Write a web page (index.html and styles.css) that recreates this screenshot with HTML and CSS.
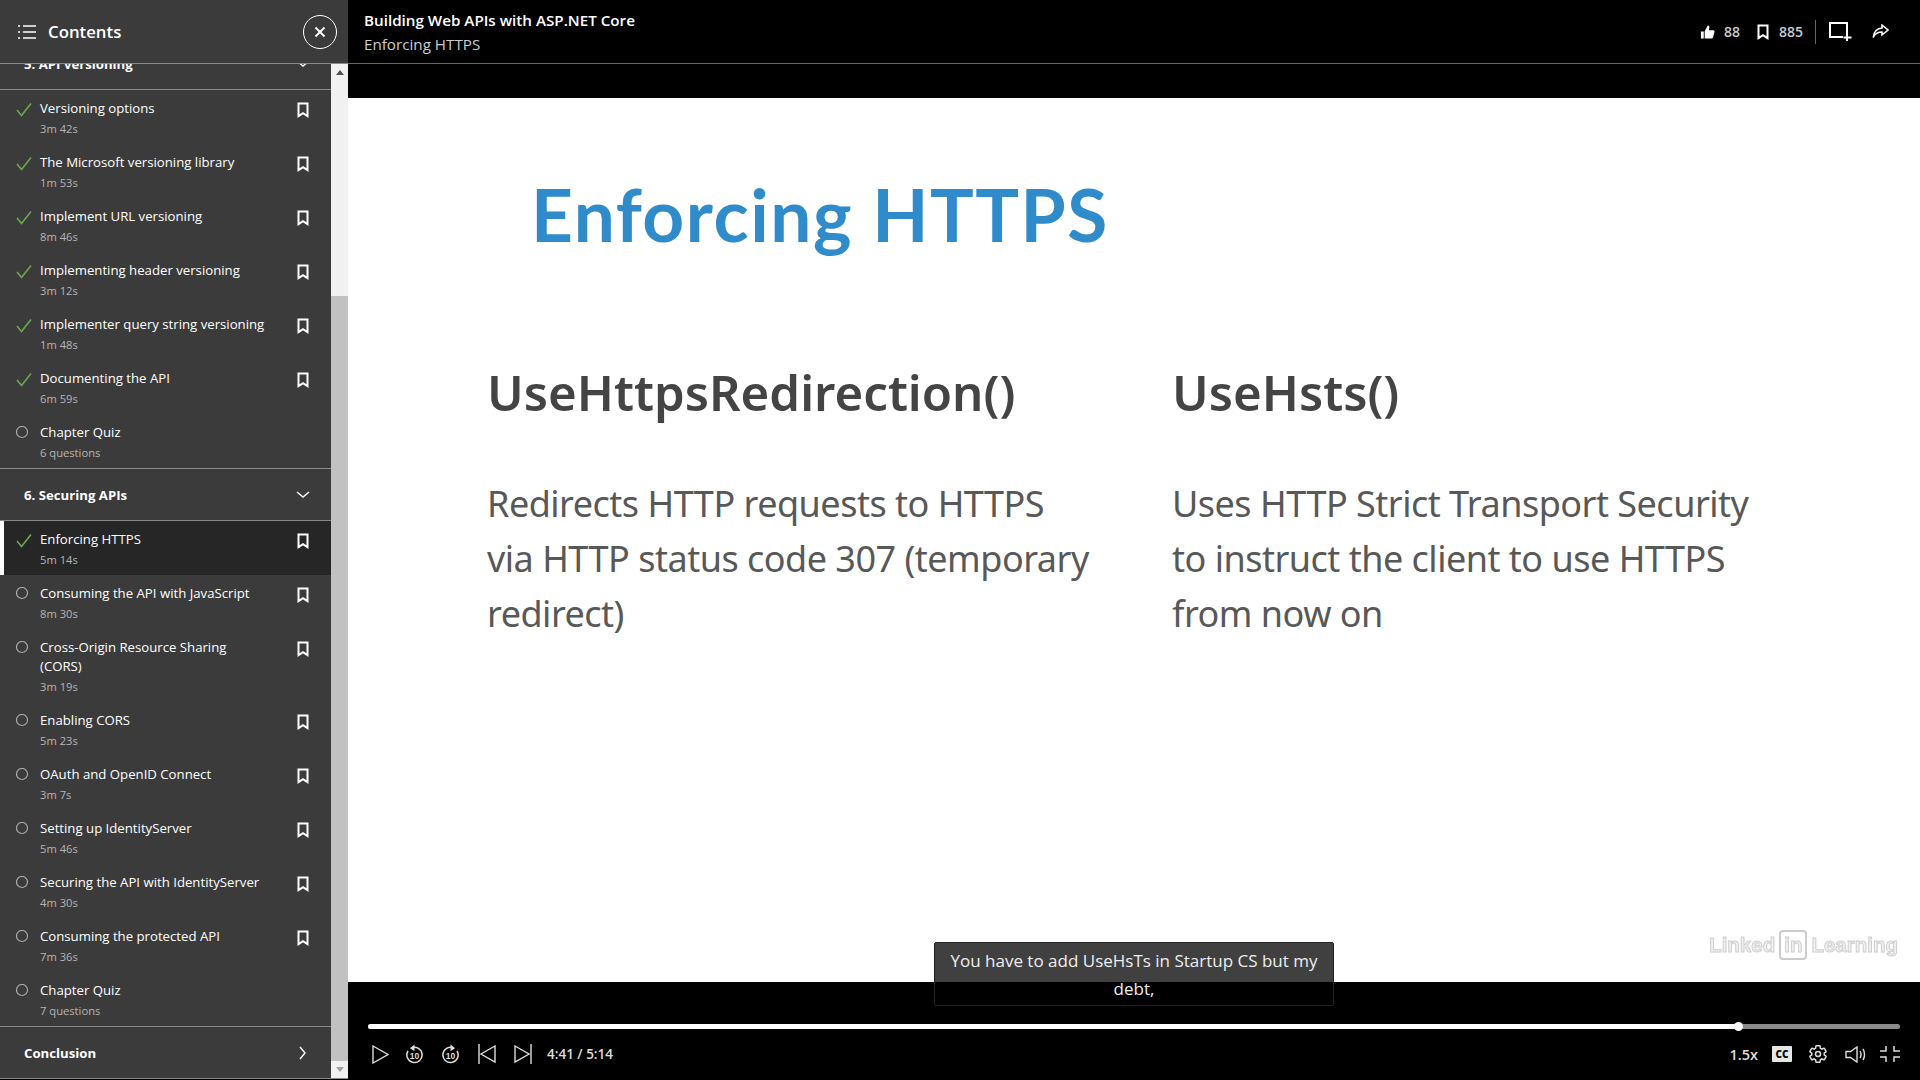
FILE: index.html
```html
<!DOCTYPE html>
<html lang="en">
<head>
    <meta charset="UTF-8">
    <meta name="viewport" content="width=device-width, initial-scale=1.0">
    <title>Enforcing HTTPS - Building Web APIs with ASP.NET Core</title>
    <link rel="stylesheet" href="styles.css">
</head>
<body>
    <svg class="icon-defs" width="0" height="0">
        <symbol id="i-check" viewBox="0 0 16 14"><path d="M1 7.5 L5.5 13 L15 1" fill="none" stroke="#6aa84f" stroke-width="1.6"/></symbol>
        <symbol id="i-circle" viewBox="0 0 16 15"><circle cx="6" cy="6" r="5.5" fill="none" stroke="#aaa" stroke-width="1.2"/></symbol>
        <symbol id="i-bookmark" viewBox="0 0 12 16"><path d="M1.5 1.5h9v12.6L6 11.2 1.5 14.1z" fill="none" stroke="#fff" stroke-width="2"/></symbol>
    </svg>

    <aside class="sidebar">
        <header class="sidebar-head">
            <svg class="list-icon" width="18" height="14" viewBox="0 0 18 14"><path d="M0 1h2M5 1h13M0 7h2M5 7h13M0 13h2M5 13h13" stroke="#fff" stroke-width="1.6" fill="none"/></svg>
            <span class="sidebar-title">Contents</span>
            <button class="close-btn">
                <svg width="12" height="12" viewBox="0 0 12 12"><path d="M1.5 1.5l9 9M10.5 1.5l-9 9" stroke="#fff" stroke-width="1.8"/></svg>
            </button>
        </header>
        <div class="sidebar-body">
            <div class="toc">
                <div class="section section-clipped">
                    <span>5. API versioning</span>
                    <svg class="chev" width="14" height="8" viewBox="0 0 14 8"><path d="M1 1l6 5 6-5" fill="none" stroke="#fff" stroke-width="1.4"/></svg>
                </div>
                <ul class="items">
                    <li class="item"><svg class="state"><use href="#i-check"/></svg><div class="item-text"><div class="item-title">Versioning options</div><div class="item-meta">3m 42s</div></div><svg class="mark"><use href="#i-bookmark"/></svg></li>
                    <li class="item"><svg class="state"><use href="#i-check"/></svg><div class="item-text"><div class="item-title">The Microsoft versioning library</div><div class="item-meta">1m 53s</div></div><svg class="mark"><use href="#i-bookmark"/></svg></li>
                    <li class="item"><svg class="state"><use href="#i-check"/></svg><div class="item-text"><div class="item-title">Implement URL versioning</div><div class="item-meta">8m 46s</div></div><svg class="mark"><use href="#i-bookmark"/></svg></li>
                    <li class="item"><svg class="state"><use href="#i-check"/></svg><div class="item-text"><div class="item-title">Implementing header versioning</div><div class="item-meta">3m 12s</div></div><svg class="mark"><use href="#i-bookmark"/></svg></li>
                    <li class="item"><svg class="state"><use href="#i-check"/></svg><div class="item-text"><div class="item-title">Implementer query string versioning</div><div class="item-meta">1m 48s</div></div><svg class="mark"><use href="#i-bookmark"/></svg></li>
                    <li class="item"><svg class="state"><use href="#i-check"/></svg><div class="item-text"><div class="item-title">Documenting the API</div><div class="item-meta">6m 59s</div></div><svg class="mark"><use href="#i-bookmark"/></svg></li>
                    <li class="item"><svg class="state"><use href="#i-circle"/></svg><div class="item-text"><div class="item-title">Chapter Quiz</div><div class="item-meta">6 questions</div></div></li>
                </ul>
                <div class="section">
                    <span>6. Securing APIs</span>
                    <svg class="chev" width="14" height="8" viewBox="0 0 14 8"><path d="M1 1l6 5 6-5" fill="none" stroke="#fff" stroke-width="1.4"/></svg>
                </div>
                <ul class="items">
                    <li class="item active"><svg class="state"><use href="#i-check"/></svg><div class="item-text"><div class="item-title">Enforcing HTTPS</div><div class="item-meta">5m 14s</div></div><svg class="mark"><use href="#i-bookmark"/></svg></li>
                    <li class="item"><svg class="state"><use href="#i-circle"/></svg><div class="item-text"><div class="item-title">Consuming the API with JavaScript</div><div class="item-meta">8m 30s</div></div><svg class="mark"><use href="#i-bookmark"/></svg></li>
                    <li class="item"><svg class="state"><use href="#i-circle"/></svg><div class="item-text"><div class="item-title">Cross-Origin Resource Sharing<br>(CORS)</div><div class="item-meta">3m 19s</div></div><svg class="mark"><use href="#i-bookmark"/></svg></li>
                    <li class="item"><svg class="state"><use href="#i-circle"/></svg><div class="item-text"><div class="item-title">Enabling CORS</div><div class="item-meta">5m 23s</div></div><svg class="mark"><use href="#i-bookmark"/></svg></li>
                    <li class="item"><svg class="state"><use href="#i-circle"/></svg><div class="item-text"><div class="item-title">OAuth and OpenID Connect</div><div class="item-meta">3m 7s</div></div><svg class="mark"><use href="#i-bookmark"/></svg></li>
                    <li class="item"><svg class="state"><use href="#i-circle"/></svg><div class="item-text"><div class="item-title">Setting up IdentityServer</div><div class="item-meta">5m 46s</div></div><svg class="mark"><use href="#i-bookmark"/></svg></li>
                    <li class="item"><svg class="state"><use href="#i-circle"/></svg><div class="item-text"><div class="item-title">Securing the API with IdentityServer</div><div class="item-meta">4m 30s</div></div><svg class="mark"><use href="#i-bookmark"/></svg></li>
                    <li class="item"><svg class="state"><use href="#i-circle"/></svg><div class="item-text"><div class="item-title">Consuming the protected API</div><div class="item-meta">7m 36s</div></div><svg class="mark"><use href="#i-bookmark"/></svg></li>
                    <li class="item"><svg class="state"><use href="#i-circle"/></svg><div class="item-text"><div class="item-title">Chapter Quiz</div><div class="item-meta">7 questions</div></div></li>
                </ul>
                <div class="section section-last">
                    <span>Conclusion</span>
                    <svg class="chev-right" width="8" height="14" viewBox="0 0 8 14"><path d="M1 1l5 6-5 6" fill="none" stroke="#fff" stroke-width="1.4"/></svg>
                </div>
            </div>
            <div class="scrollbar">
                <div class="scroll-arrow"><span class="arrow-up"></span></div>
                <div class="scroll-space"></div>
                <div class="scroll-thumb"></div>
                <div class="scroll-arrow"><span class="arrow-down"></span></div>
            </div>
        </div>
    </aside>

    <main class="main">
        <header class="topbar">
            <div class="course">
                <div class="course-name">Building Web APIs with ASP.NET Core</div>
                <div class="video-name">Enforcing HTTPS</div>
            </div>
            <div class="actions">
                <svg width="15" height="16" viewBox="0 0 16 16"><path d="M1 7.5h3V15H1zM5 7.2 8.2 1c1.5 0 2.1 1 1.7 2.6L9.4 6H14c1.2 0 1.800 1 1.500 2l-1.700 5.800c-.3.8-.8 1.200-1.600 1.200H5z" fill="#fff"/></svg>
                <span class="count count-likes">88</span>
                <svg class="bm-top" width="12" height="16"><use href="#i-bookmark"/></svg>
                <span class="count">885</span>
                <span class="divider"></span>
                <svg class="add-icon" width="23" height="19" viewBox="0 0 23 19"><path d="M18 13V1H1v14h13" fill="none" stroke="#fff" stroke-width="2"/><path d="M18 12v7M14.500 15.500h8" stroke="#fff" stroke-width="2"/></svg>
                <svg class="share-icon" width="17" height="15" viewBox="0 0 17 15"><path d="M10 1l6 5-6 5V8C6 8 3 9.500 1.200 13.500 1.500 8 5 4.200 10 4z" fill="none" stroke="#fff" stroke-width="1.500"/></svg>
            </div>
        </header>
        <div class="video-gap"></div>

        <section class="slide">
            <h1 class="slide-title">Enforcing HTTPS</h1>
            <div class="slide-cols">
                <div>
                    <h2>UseHttpsRedirection()</h2>
                    <p>Redirects HTTP requests to HTTPS<br>via HTTP status code 307 (temporary<br>redirect)</p>
                </div>
                <div>
                    <h2>UseHsts()</h2>
                    <p>Uses HTTP Strict Transport Security<br>to instruct the client to use HTTPS<br>from now on</p>
                </div>
            </div>
            <div class="watermark"><span>Linked</span><span class="wm-in">in</span><span>Learning</span></div>
        </section>

        <footer class="player">
            <div class="caption">You have to add UseHsTs in Startup CS but my debt,</div>
            <div class="progress"><div class="progress-done"></div><div class="progress-knob"></div></div>
            <div class="controls">
                <svg width="17" height="19" viewBox="0 0 17 19"><path d="M1 1l15 8.500L1 18z" fill="none" stroke="#ddd" stroke-width="1.400"/></svg>
                <svg class="ctl-replay" width="19" height="20" viewBox="0 0 19 20"><path d="M6 4.200A7.600 7.600 0 1 1 3 7" fill="none" stroke="#ddd" stroke-width="1.500"/><path d="M9.500 0.500 5 4.200l4.500 3z" fill="#ddd"/><text x="9.500" y="15" class="ten">10</text></svg>
                <svg class="ctl-forward" width="19" height="20" viewBox="0 0 19 20"><path d="M13 4.200A7.600 7.600 0 1 0 16 7" fill="none" stroke="#ddd" stroke-width="1.500"/><path d="M9.500 0.500 14 4.200l-4.500 3z" fill="#ddd"/><text x="9.500" y="15" class="ten">10</text></svg>
                <svg class="ctl-prev" width="18" height="20" viewBox="0 0 18 20"><path d="M1 0v20M17 2 3 10l14 8z" fill="none" stroke="#ddd" stroke-width="1.400"/></svg>
                <svg class="ctl-next" width="18" height="20" viewBox="0 0 18 20"><path d="M17 0v20M1 2l14 8-14 8z" fill="none" stroke="#ddd" stroke-width="1.400"/></svg>
                <span class="time">4:41 / 5:14</span>
                <span class="speed">1.5x</span>
                <span class="cc">CC</span>
                <svg class="ctl-gear" width="20" height="20" viewBox="0 0 24 24"><path d="M19.430 12.980c.04-.32.07-.64.07-.98 0-.34-.03-.66-.07-.98l2.110-1.650c.19-.15.24-.42.12-.64l-2-3.460c-.12-.22-.39-.3-.61-.22l-2.490 1c-.52-.4-1.080-.73-1.690-.98l-.38-2.650C14.460 2.180 14.250 2 14 2h-4c-.25 0-.46.18-.49.42l-.38 2.650c-.61.25-1.170.59-1.690.98l-2.490-1c-.23-.09-.49 0-.61.22l-2 3.460c-.13.22-.07.49.12.64l2.110 1.650c-.04.32-.07.65-.07.98 0 .33.03.66.07.98l-2.110 1.650c-.19.15-.24.42-.12.64l2 3.460c.12.22.39.3.61.22l2.490-1c.52.4 1.080.73 1.690.98l.38 2.650c.03.24.24.42.49.42h4c.25 0 .46-.18.49-.42l.38-2.650c.61-.25 1.170-.59 1.690-.98l2.490 1c.23.09.49 0 .61-.22l2-3.460c.12-.22.07-.49-.12-.64l-2.110-1.650z" fill="none" stroke="#ddd" stroke-width="1.800"/><circle cx="12" cy="12" r="3" fill="none" stroke="#ddd" stroke-width="1.800"/></svg>
                <svg class="ctl-volume" width="21" height="17" viewBox="0 0 21 17"><path d="M1 5.500h4.500L12 1v15l-6.500-4.500H1z" fill="none" stroke="#ddd" stroke-width="1.400"/><path d="M15 5c1.200 2 1.200 5 0 7M18 3c2 3 2 8 0 11" fill="none" stroke="#ddd" stroke-width="1.400"/></svg>
                <svg class="ctl-exit" width="20" height="16" viewBox="0 0 20 16"><path d="M6 0v5H0M14 0v5h6M6 16v-5H0M14 16v-5h6" fill="none" stroke="#ddd" stroke-width="1.500"/></svg>
            </div>
        </footer>
    </main>
</body>
</html>
```

FILE: styles.css
```css
* {
    box-sizing: border-box;
}
body {
    margin: 0;
    height: 1080px;
    overflow: hidden;
    display: flex;
    background-color: #000;
    color: #fff;
    font-family: "Open Sans", "Noto Sans", sans-serif;
}
.icon-defs {
    position: absolute;
}

/* Sidebar */
.sidebar {
    width: 348px;
    flex: none;
    height: 1079px;
    display: flex;
    flex-direction: column;
    background-color: #3b3b3b;
    border-bottom: 1px solid #8a8a8a;
}
.sidebar-head {
    height: 64px;
    flex: none;
    display: flex;
    align-items: center;
    padding: 0 11px 0 18px;
    border-bottom: 1px solid #888;
}
.sidebar-title {
    margin-left: 12px;
    font-size: 16.8px;
    font-weight: 600;
}
.close-btn {
    margin-left: auto;
    width: 34px;
    height: 34px;
    border: 1.5px solid #fff;
    border-radius: 50%;
    background: none;
    padding: 0;
    display: flex;
    align-items: center;
    justify-content: center;
}
.sidebar-body {
    flex: 1;
    display: flex;
    min-height: 0;
}
.toc {
    width: 331px;
    flex: none;
    overflow: hidden;
}
.section {
    height: 53px;
    display: flex;
    align-items: center;
    justify-content: space-between;
    padding: 0 21px 0 24px;
    font-size: 13.2px;
    font-weight: 700;
    border-bottom: 1px solid #888;
}
.section-clipped {
    margin-top: -27px;
    padding-top: 2px;
}
.section-last {
    border-bottom: none;
    padding-right: 24px;
}
.items {
    list-style: none;
    margin: 0;
    padding: 0;
}
.items + .section {
    border-top: 1px solid #888;
}
.item {
    display: flex;
    align-items: flex-start;
    padding: 9px 22px 6px 16px;
    min-height: 54px;
}
.item.active {
    background-color: #262626;
    border-left: 4px solid #fff;
    padding-left: 12px;
}
.state {
    width: 16px;
    height: 15px;
    flex: none;
    margin-top: 3px;
}
.item-text {
    margin-left: 8px;
    flex: 1;
}
.item-title {
    font-size: 13.2px;
    line-height: 19px;
}
.item-meta {
    margin-top: 2px;
    font-size: 11.2px;
    line-height: 18px;
    color: #b5b5b5;
}
.mark {
    width: 12px;
    height: 16px;
    flex: none;
    margin-top: 3px;
}

/* Scrollbar */
.scrollbar {
    width: 17px;
    flex: none;
    display: flex;
    flex-direction: column;
    background-color: #f1f1f1;
}
.scroll-arrow {
    height: 17px;
    flex: none;
    display: flex;
    align-items: center;
    justify-content: center;
}
.arrow-up {
    border: 4px solid transparent;
    border-top: none;
    border-bottom: 5px solid #505050;
}
.arrow-down {
    border: 4px solid transparent;
    border-bottom: none;
    border-top: 5px solid #a3a3a3;
}
.scroll-space {
    height: 215px;
    flex: none;
}
.scroll-thumb {
    flex: 1;
    background-color: #c1c1c1;
}

/* Main column */
.main {
    flex: 1;
    min-width: 0;
    display: flex;
    flex-direction: column;
}
.topbar {
    height: 64px;
    flex: none;
    display: flex;
    align-items: center;
    justify-content: space-between;
    padding: 0 31px 0 16px;
    border-bottom: 1px solid #666;
}
.course {
    padding-top: 1px;
}
.course-name {
    font-size: 15.2px;
    font-weight: 600;
    line-height: 24px;
}
.video-name {
    font-size: 15.2px;
    line-height: 24px;
    color: #ccc;
}
.actions {
    display: flex;
    align-items: center;
}
.count {
    font-size: 14px;
    font-weight: 600;
    color: #ccc;
    margin-left: 10px;
}
.count-likes {
    margin-left: 9px;
}
.bm-top {
    margin-left: 17px;
}
.divider {
    width: 1px;
    height: 24px;
    background-color: #666;
    margin: 0 13px 0 12px;
}
.add-icon {
    margin-right: 20px;
}
.video-gap {
    height: 34px;
    flex: none;
}

/* Slide */
.slide {
    position: relative;
    flex: 1;
    background-color: #fff;
    padding: 69px 0 0 183px;
}
.slide-title {
    margin: 0;
    font-family: Lato, sans-serif;
    font-size: 73px;
    letter-spacing: 1.5px;
    line-height: 94px;
    font-weight: 700;
    color: #2f8bca;
}
.slide-cols {
    display: grid;
    grid-template-columns: 685px 1fr;
    margin: 97px 0 0 -44px;
}
.slide-cols h2 {
    margin: 0 0 50px;
    font-family: "Noto Sans", sans-serif;
    font-size: 49.2px;
    line-height: 68px;
    font-weight: 600;
    color: #444;
}
.slide-cols p {
    margin: 0;
    font-family: "Noto Sans", sans-serif;
    font-size: 36px;
    letter-spacing: -0.5px;
    line-height: 55px;
    color: #585858;
}
.watermark {
    position: absolute;
    right: 22px;
    bottom: 22px;
    display: flex;
    align-items: center;
    gap: 4px;
    font-family: "Liberation Sans", sans-serif;
    font-size: 20.5px;
    font-weight: 700;
    color: #f0f0f0;
    -webkit-text-stroke: 1px #cfcfcf;
    filter: blur(0.7px);
}
.wm-in {
    border: 2px solid #ccc;
    border-radius: 4px;
    padding: 1px 3px;
}

/* Player */
.player {
    position: relative;
    height: 98px;
    flex: none;
    padding: 42px 20px 0;
}
.caption {
    position: absolute;
    left: 586px;
    top: -40px;
    width: 400px;
    height: 64px;
    padding: 4px 8px 0;
    text-align: center;
    font-size: 17px;
    line-height: 28px;
    color: #eee;
    background-color: rgba(0, 0, 0, 0.75);
    border: 1px solid #222;
    border-radius: 2px;
}
.progress {
    position: relative;
    height: 5px;
    border-radius: 3px;
    background-color: #8a8a8a;
}
.progress-done {
    width: 1371px;
    height: 100%;
    border-radius: 3px 0 0 3px;
    background-color: #fff;
}
.progress-knob {
    position: absolute;
    left: 1366px;
    top: -2px;
    width: 9px;
    height: 9px;
    border-radius: 50%;
    background-color: #fff;
}
.controls {
    display: flex;
    align-items: center;
    height: 20px;
    margin-top: 15px;
    padding-left: 4px;
}
.ctl-replay {
    margin-left: 16px;
}
.ctl-forward {
    margin-left: 17px;
}
.ctl-prev {
    margin-left: 18px;
}
.ctl-next {
    margin-left: 18px;
}
.time {
    margin-left: 15px;
    font-size: 13.500px;
    font-weight: 600;
    color: #ddd;
}
.speed {
    margin-left: auto;
    font-size: 14.500px;
    font-weight: 600;
    color: #ddd;
}
.cc {
    margin-left: 14px;
    width: 20px;
    height: 16px;
    border-radius: 1px;
    background-color: #e6e6e6;
    color: #000;
    font-size: 10px;
    font-weight: 800;
    line-height: 16px;
    text-align: center;
}
.ctl-gear {
    margin-left: 16px;
}
.ctl-volume {
    margin-left: 17px;
}
.ctl-exit {
    margin-left: 14px;
}
.ten {
    font-family: "Liberation Sans", sans-serif;
    font-size: 8.500px;
    font-weight: 700;
    fill: #ddd;
    text-anchor: middle;
}
```
